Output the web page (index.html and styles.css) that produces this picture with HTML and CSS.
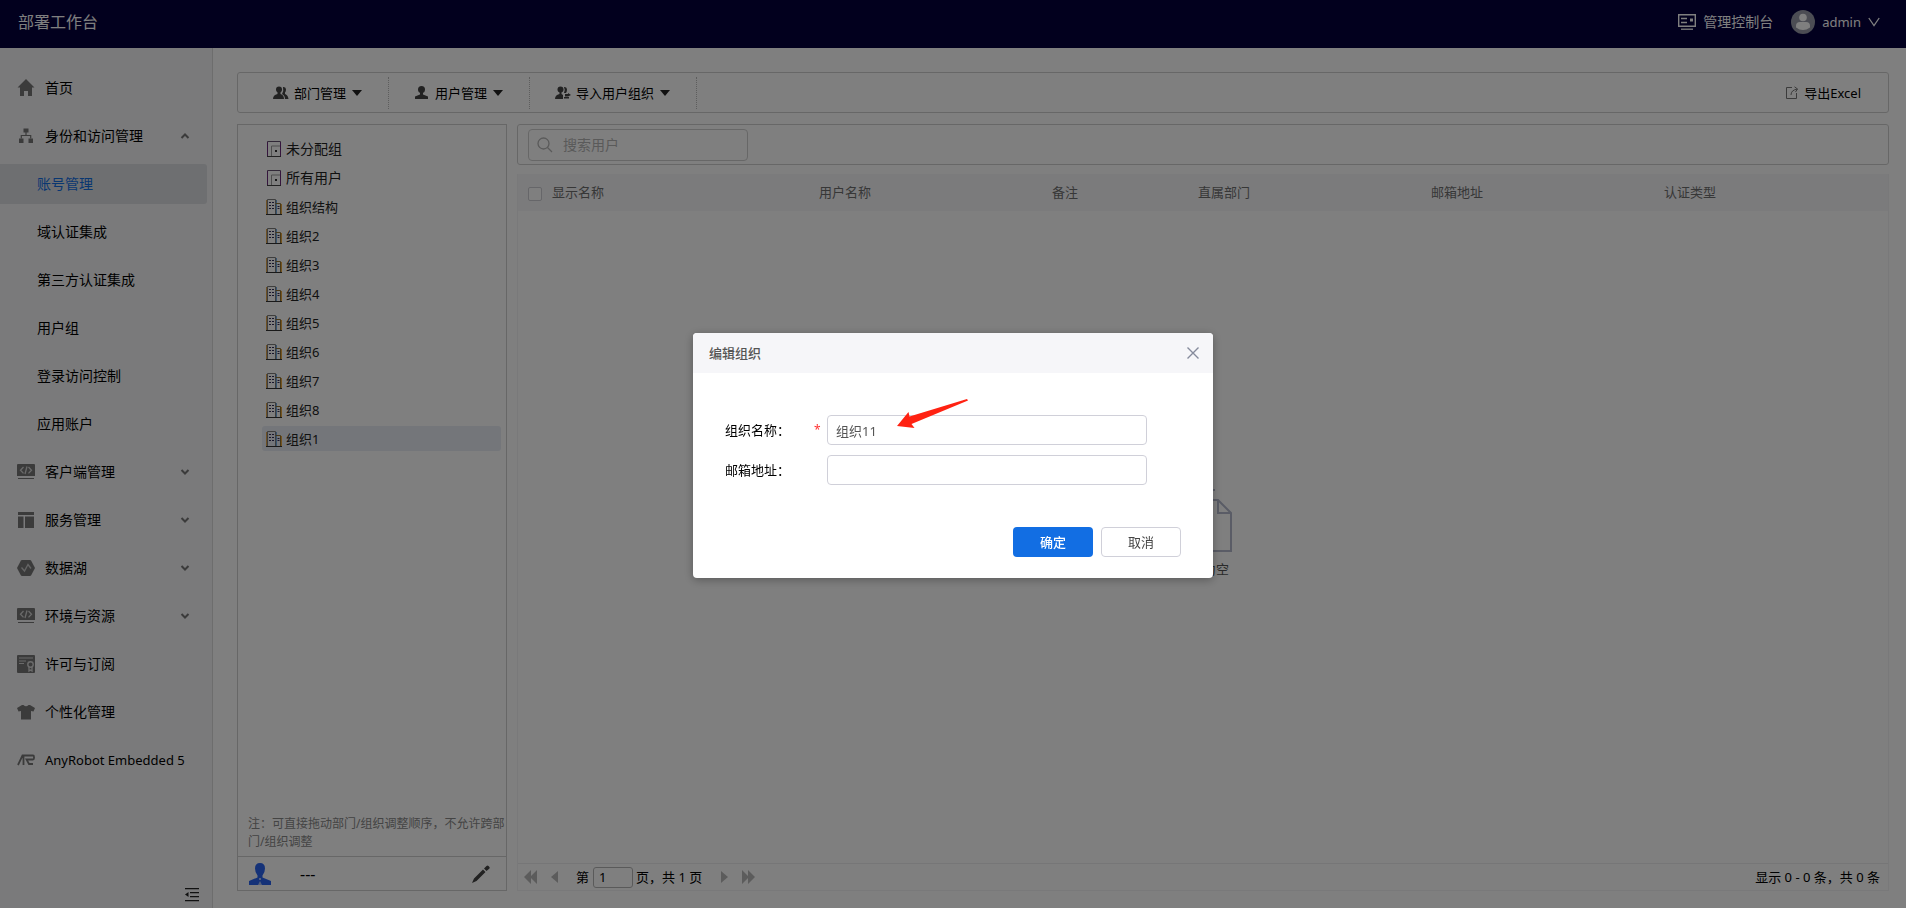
FILE: index.html
```html
<!DOCTYPE html>
<html lang="zh-CN">
<head>
<meta charset="utf-8">
<title>部署工作台</title>
<link rel="stylesheet" href="styles.css">
</head>
<body>
<svg class="defs" aria-hidden="true">
  <symbol id="down" viewBox="0 0 10 8"><path d="M1.5 2 5 5.5 8.500 2" fill="none" stroke="currentColor" stroke-width="2"/></symbol>
  <symbol id="up" viewBox="0 0 10 8"><path d="M1.500 6 5 2.500 8.500 6" fill="none" stroke="currentColor" stroke-width="2"/></symbol>
  <symbol id="code" viewBox="0 0 18 18"><path fill="currentColor" d="M1 1h16a1 1 0 0 1 1 1v11H0V2a1 1 0 0 1 1-1zM1 15h16v1H1z"/><path d="M6.500 4 3.500 7.200l3 3.200M11.500 4l3 3.200-3 3.200M10 3.500 8 11" fill="none" stroke="#d4d4d4" stroke-width="1.300"/></symbol>
  <symbol id="door" viewBox="0 0 16 16"><path d="M1.500.500h13v15h-13z" fill="none" stroke="#62506f"/><path d="M5.500 15V5h8.500" fill="none" stroke="#9a9a9a"/><path d="M9 9h2v2H9z" fill="#333"/><path d="M14.500 1v14M1.500 1v14" stroke="#6b2a7a"/><path d="M1 15.500h14" stroke="#444"/></symbol>
  <symbol id="building" viewBox="0 0 16 16"><path d="M1.500 15V.500h8V15" fill="none" stroke="#7d7d7d"/><path d="M.500 15V1" stroke="#dca24a"/><path d="M10.500 15V1" stroke="#6fa9e0"/><path d="M10 4.500h4.500V15" fill="none" stroke="#8f7030"/><path d="M15.500 5v10" stroke="#e8a840"/><path d="M3 3.500h2m1 0h2M3 6.500h2m1 0h2M3 9.500h2m1 0h2M11.500 7.500h2M11.500 9.500h2" stroke="#302c58"/><path d="M0 15.500h16" stroke="#333"/></symbol>
</svg>

<header class="topbar">
  <h1 class="brand">部署工作台</h1>
  <div class="topbar-right">
    <a class="top-link" href="#">
      <svg width="18" height="16" viewBox="0 0 18 16" fill="none" stroke="currentColor"><path d="M.700.700h16.600v11.600H.700z" stroke-width="1.400"/><path d="M3 4.500h6M3 8.500h6" stroke-width="1.300"/><path d="M12 4.500h3v3h-3z" fill="currentColor" stroke="none"/><path d="M3 15.200h12" stroke-width="1.300"/></svg>
      管理控制台</a>
    <button class="user-button" type="button">
      <svg width="24" height="24" viewBox="0 0 24 24"><circle cx="12" cy="12" r="12" fill="#989ba8"/><circle cx="12" cy="7.500" r="3.800" fill="#fff"/><path fill="#fff" d="M5 16q0-4 4-4h6q4 0 4 4v1.500q-7 5-14 0z"/></svg>
      <span>admin</span>
      <svg width="12" height="10" viewBox="0 0 12 10"><path d="M.800 1 6 8.500 11.200 1" fill="none" stroke="currentColor" stroke-width="1.300"/></svg>
    </button>
  </div>
</header>

<div class="shell">
  <nav class="sidebar">
    <a class="nav-item" href="#"><svg class="nav-icon" viewBox="0 0 18 18" fill="currentColor"><path d="M9 0 .500 8.500H3V17h4v-5h4v5h4V8.500h2.500z"/></svg><span>首页</span></a>
    <a class="nav-item" href="#"><svg class="nav-icon" viewBox="0 0 18 18" fill="currentColor"><path d="M6.500 1.500h5v4h-5zM2 11.500h4.500V16H2zM11.500 11.500H16V16h-4.500z"/><path d="M9 5v3.500M4.300 11.500v-3h9.400v3" fill="none" stroke="currentColor" stroke-width="1.200"/></svg><span>身份和访问管理</span><svg class="chevron"><use href="#up"/></svg></a>
    <a class="nav-item sub active" href="#">账号管理</a>
    <a class="nav-item sub" href="#">域认证集成</a>
    <a class="nav-item sub" href="#">第三方认证集成</a>
    <a class="nav-item sub" href="#">用户组</a>
    <a class="nav-item sub" href="#">登录访问控制</a>
    <a class="nav-item sub" href="#">应用账户</a>
    <a class="nav-item" href="#"><svg class="nav-icon"><use href="#code"/></svg><span>客户端管理</span><svg class="chevron"><use href="#down"/></svg></a>
    <a class="nav-item" href="#"><svg class="nav-icon" viewBox="0 0 18 18" fill="currentColor"><path d="M1 1h16v3H1zM1 5.500h5.500V17H1zM8 5.500h9V17H8z"/></svg><span>服务管理</span><svg class="chevron"><use href="#down"/></svg></a>
    <a class="nav-item" href="#"><svg class="nav-icon" viewBox="0 0 18 18"><path fill="currentColor" d="M5 1h8q.800 0 1.200.700L18 9l-3.800 7.300q-.400.700-1.200.700H5q-.800 0-1.200-.700L0 9l3.800-7.300Q4.200 1 5 1z"/><path d="m4.500 8.500 3 3.500 3.500-6.500 3 4" fill="none" stroke="#c8c8c8" stroke-width="1.300"/></svg><span>数据湖</span><svg class="chevron"><use href="#down"/></svg></a>
    <a class="nav-item" href="#"><svg class="nav-icon"><use href="#code"/></svg><span>环境与资源</span><svg class="chevron"><use href="#down"/></svg></a>
    <a class="nav-item" href="#"><svg class="nav-icon" viewBox="0 0 18 18"><rect width="18" height="18" rx="1" fill="currentColor"/><path d="M2 3h14M2 6h7M2 8.500h5" stroke="#d4d4d4" stroke-width="1.200"/><circle cx="13.500" cy="9.500" r="2.700" fill="none" stroke="#d8d8d8" stroke-width="1.400"/><path d="M12 12v4l1.500-1 1.500 1v-4" fill="none" stroke="#d8d8d8" stroke-width="1.300"/></svg><span>许可与订阅</span></a>
    <a class="nav-item" href="#"><svg class="nav-icon" viewBox="0 0 18 18" fill="currentColor"><path d="M5 2h1.500Q9 4.500 11.500 2H13l5 3-1.500 3.500L14 8v8.500H4V8l-2.500.500L0 5z"/></svg><span>个性化管理</span></a>
    <a class="nav-item" href="#"><svg class="nav-icon" viewBox="0 0 18 18" fill="none" stroke="currentColor" stroke-width="1.800"><path d="M1 14 5.500 4.500h10.500q1 0 1 1.500v1q0 1.500-1 1.500H9.500l2.500 4.500h4M6.500 5v9"/></svg><span class="latin">AnyRobot Embedded 5</span></a>
    <button class="collapse" type="button" aria-label="收起菜单"><svg width="14" height="14" viewBox="0 0 14 14"><path d="M0 .700h14M5 4.700h9M5 8.700h9M0 12.700h14" stroke="#222" stroke-width="1.300"/><path d="M3.500 4v5L0 6.500z" fill="#222"/></svg></button>
  </nav>

  <main class="content">
    <div class="toolbar">
      <button class="tool first" type="button"><svg width="16" height="14" viewBox="0 0 16 14" fill="#444"><circle cx="6" cy="3.500" r="3"/><path d="M4.500 5h3v3Q11 9 11 13H0q0-4 4.500-5z"/><path d="M10 1q3-.500 3 2.500 0 2-1 3v1.500q3 1 3.500 5H12q0-3.500-3-5Q11 5 10 1z"/></svg><span>部门管理</span><i class="caret"></i></button>
      <button class="tool" type="button"><svg width="16" height="14" viewBox="0 0 16 14" fill="#444"><circle cx="7.500" cy="3.500" r="3.500"/><path d="M6 5h3v3.500l5 2V13H1v-2.500l5-2z"/></svg><span>用户管理</span><i class="caret"></i></button>
      <button class="tool" type="button"><svg width="16" height="14" viewBox="0 0 16 14" fill="#444"><circle cx="5.500" cy="3.500" r="3"/><path d="M4.500 5h2v3L8 9v4H0q0-4 4.500-5zM9 1q3-.500 3 2.500 0 2-1 3.500H9Q10.500 4 9 1zM10 8h3V7l3 2-3 1.500h-3zM9 11h5v1.500H9z"/></svg><span>导入用户组织</span><i class="caret"></i></button>
      <button class="export" type="button"><svg width="14" height="14" viewBox="0 0 14 14" fill="none" stroke="#777"><path d="M7 1.500H1.500v11h10V7"/><path d="M6 9Q6 4 12.500 3M9.500.800l3 2.200-2 3"/></svg><span>导出Excel</span></button>
    </div>

    <div class="columns">
      <aside class="org">
        <div class="tree-panel">
          <ul class="tree">
            <li class="root"><svg class="tree-icon"><use href="#door"/></svg>未分配组</li>
            <li class="root"><svg class="tree-icon"><use href="#door"/></svg>所有用户</li>
            <li><svg class="tree-icon"><use href="#building"/></svg>组织结构</li>
            <li><svg class="tree-icon"><use href="#building"/></svg>组织2</li>
            <li><svg class="tree-icon"><use href="#building"/></svg>组织3</li>
            <li><svg class="tree-icon"><use href="#building"/></svg>组织4</li>
            <li><svg class="tree-icon"><use href="#building"/></svg>组织5</li>
            <li><svg class="tree-icon"><use href="#building"/></svg>组织6</li>
            <li><svg class="tree-icon"><use href="#building"/></svg>组织7</li>
            <li><svg class="tree-icon"><use href="#building"/></svg>组织8</li>
            <li class="selected"><svg class="tree-icon"><use href="#building"/></svg>组织1</li>
          </ul>
          <p class="hint">注：可直接拖动部门/组织调整顺序，不允许跨部门/组织调整</p>
        </div>
        <div class="manager">
          <svg width="22" height="22" viewBox="0 0 22 22" fill="#2a65f0"><path d="M11 0q5 0 5 5.500 0 4-2.500 7v2l8.500 3.500v4H0v-4l8.500-3.500v-2Q6 9.500 6 5.500 6 0 11 0z"/><path d="M10 15h2v2h-2zM9 22l2-4 2 4z" fill="#fff" opacity=".6"/></svg>
          <span class="manager-name">---</span>
          <button type="button" class="edit" aria-label="编辑"><svg width="18" height="18" viewBox="0 0 18 18" fill="#444"><path d="M12 3.500 14.500 1q1-1 2 0l.700.700q1 1 0 2L14.500 6zM11 4.500 13.500 7l-9 9L0 18l2-4.500z"/></svg></button>
        </div>
      </aside>

      <section class="users">
        <div class="search-bar">
          <label class="search"><svg width="16" height="16" viewBox="0 0 16 16" fill="none" stroke="#b4b4b4" stroke-width="1.300"><circle cx="6.500" cy="6.500" r="5.500"/><path d="m10.500 10.500 4.500 4.500"/></svg><input type="text" placeholder="搜索用户" aria-label="搜索用户"></label>
        </div>
        <div class="grid">
          <table>
            <colgroup><col class="c-check"><col class="c-wide"><col class="c-user"><col class="c-note"><col class="c-user"><col class="c-user"><col></colgroup>
            <thead><tr><th><input type="checkbox" aria-label="全选"></th><th>显示名称</th><th>用户名称</th><th>备注</th><th>直属部门</th><th>邮箱地址</th><th>认证类型</th></tr></thead>
          </table>
          <div class="empty">
            <svg width="60" height="64" viewBox="0 0 60 64" fill="none" stroke="#b4b9cc" stroke-width="2"><path d="M2 12h43l13 13v38H2zM45 12v13h13M30 0v4M40 2h2"/></svg>
            <p>列表为空</p>
          </div>
          <div class="pager">
            <button type="button" aria-label="首页"><svg width="14" height="14" viewBox="0 0 14 14"><path d="M7 0v14L0 7zM13 0v14L6 7z"/></svg></button>
            <button type="button" aria-label="上一页"><svg width="8" height="14" viewBox="0 0 8 14"><path d="M7 1v12L0 7z"/></svg></button>
            <label class="page-no">第 <input type="text" value="1" aria-label="页码"></label>
            <span class="page-total">页，共 1 页</span>
            <button type="button" aria-label="下一页"><svg width="8" height="14" viewBox="0 0 8 14"><path d="M1 1v12l7-6z"/></svg></button>
            <button type="button" aria-label="末页"><svg width="14" height="14" viewBox="0 0 14 14"><path d="M1 0v14l7-7zM7 0v14l7-7z"/></svg></button>
            <span class="summary">显示 0 - 0 条，共 0 条</span>
          </div>
        </div>
      </section>
    </div>
  </main>
</div>

<div class="mask">
  <form class="dialog" role="dialog" aria-labelledby="dialog-title">
    <div class="dialog-head">
      <h2 id="dialog-title">编辑组织</h2>
      <button type="button" class="close" aria-label="关闭"><svg width="12" height="12" viewBox="0 0 12 12"><path d="m.500.500 11 11m0-11-11 11" stroke="#868b9c" stroke-width="1.400"/></svg></button>
    </div>
    <div class="dialog-body">
      <div class="field"><label for="org-name">组织名称：</label><span class="required">*</span><input id="org-name" type="text" value="组织11"></div>
      <div class="field"><label for="org-mail">邮箱地址：</label><span class="required"></span><input id="org-mail" type="text"></div>
      <svg class="arrow" width="72" height="30" viewBox="0 0 72 30"><path fill="#ff2212" d="M0 27 11.500 13l1 4.500L70 0l1 1.500L14.500 25l3 4z"/></svg>
    </div>
    <div class="dialog-foot">
      <button type="submit" class="primary">确定</button>
      <button type="button" class="secondary">取消</button>
    </div>
  </form>
</div>
</body>
</html>
```

FILE: styles.css
```css
* { box-sizing: border-box; }
body {
  margin: 0;
  height: 100vh;
  display: flex;
  flex-direction: column;
  overflow: hidden;
  background: #fff;
  color: #000;
  font: 13px/18px "Noto Sans", "Noto Sans CJK SC", sans-serif;
}
button, input { font: inherit; color: inherit; }
button { display: flex; align-items: center; border: 0; padding: 0; background: none; }
a { color: inherit; text-decoration: none; }
h1, h2, p, ul { margin: 0; padding: 0; }
svg { flex: none; }
.defs { position: absolute; width: 0; height: 0; }

.topbar {
  flex: none;
  height: 48px;
  display: flex;
  align-items: center;
  justify-content: space-between;
  padding: 0 26px 4px 18px;
  background: #04003c;
  color: #fff;
}
.brand { font-size: 16px; line-height: 24px; font-weight: 400; }
.topbar-right { display: flex; align-items: center; gap: 18px; }
.top-link { display: flex; align-items: center; gap: 7px; font-size: 14px; }
.user-button { gap: 7px; }

.shell { flex: 1; min-height: 0; display: flex; }
.sidebar {
  flex: none;
  width: 213px;
  display: flex;
  flex-direction: column;
  gap: 8px;
  padding: 20px 5px 6px 0;
  background: #f5f5f6;
  border-right: 1px solid #dadada;
  font-size: 14px;
}
.nav-item { height: 40px; display: flex; align-items: center; padding: 0 17px; gap: 10px; white-space: nowrap; }
.nav-icon { width: 18px; height: 18px; color: #777; }
.latin { font-size: 13px; }
.chevron { width: 10px; height: 8px; margin-left: auto; color: #777; }
.sub { padding-left: 37px; }
.active { background: #dcdee2; color: #126ee3; border-radius: 0 3px 3px 0; }
.collapse { margin: auto 8px 0 auto; }

.content { flex: 1; min-width: 0; display: flex; flex-direction: column; gap: 11px; padding: 24px 17px 17px 24px; }
.toolbar { flex: none; height: 41px; display: flex; align-items: center; border: 1px solid #cfcfcf; border-radius: 3px; }
.tool { height: 32px; padding: 0 26px 0 25px; border-right: 1px dotted #bbb; gap: 5px; }
.first { padding-left: 35px; }
.caret { margin-left: 1px; border: 5px solid transparent; border-top: 6px solid #222; border-bottom: 0; }
.export { margin: 0 27px 0 auto; gap: 5px; }

.columns { flex: 1; min-height: 0; display: flex; gap: 10px; }
.org { flex: none; width: 270px; display: flex; flex-direction: column; }
.tree-panel { flex: 1; display: flex; flex-direction: column; justify-content: space-between; border: 1px solid #cfcfcf; border-bottom: 0; padding: 11px 0 5px; }
.tree { list-style: none; display: flex; flex-direction: column; gap: 4px; padding: 0 5px 0 24px; color: #222; }
.tree li { height: 25px; display: flex; align-items: center; gap: 4px; padding-left: 4px; border-radius: 3px; }
.tree .root { font-size: 14px; }
.tree .selected { background: #e8edf4; }
.tree-icon { width: 16px; height: 16px; }
.hint { padding-left: 10px; font-size: 12px; color: #888; }
.manager { flex: none; height: 35px; display: flex; align-items: center; gap: 29px; padding: 0 16px 0 11px; border: 1px solid #cfcfcf; }
.manager-name { font-size: 16px; }
.edit { margin-left: auto; }

.users { flex: 1; min-width: 0; display: flex; flex-direction: column; gap: 9px; }
.search-bar { flex: none; height: 41px; display: flex; align-items: center; padding-left: 10px; border: 1px solid #cfcfcf; border-radius: 3px; }
.search { width: 220px; height: 32px; display: flex; align-items: center; gap: 10px; padding: 0 8px; border: 1px solid #cfcfcf; border-radius: 4px; font-size: 14px; }
.search input { flex: 1; min-width: 0; border: 0; padding: 0; outline: 0; background: none; }
.search input::placeholder { color: #b4b4b4; }

.grid { flex: 1; min-height: 0; display: flex; flex-direction: column; border: 1px solid #f3f3f5; border-top: 0; }
table { width: 100%; table-layout: fixed; border-collapse: collapse; }
th { height: 37px; padding: 0 0 2px; text-align: left; font-weight: 400; color: #6f6f6f; background: #f6f6f9; }
th input { display: block; appearance: none; width: 14px; height: 14px; margin: 4px 0 0 10px; border: 1px solid #cdcdd2; border-radius: 2px; background: #fff; }
.c-check { width: 34px; }
.c-wide { width: 267px; }
.c-user { width: 233px; }
.c-note { width: 146px; }
.empty { flex: 1; display: flex; flex-direction: column; align-items: center; justify-content: center; gap: 8px; padding-bottom: 8px; color: #555; }
.pager { flex: none; height: 27px; display: flex; align-items: center; padding: 0 8px 0 6px; border-top: 1px solid #ececee; }
.pager button { margin-right: 13px; }
.pager button path { fill: #b9b9b9; }
.page-no { display: flex; align-items: center; gap: 4px; margin: 0 3px 0 4px; }
.page-no input { width: 40px; height: 21px; padding: 0 5px; border: 1px solid #b5b5b5; border-radius: 3px; background: #fff; }
.page-total { margin-right: 18px; }
.summary { margin-left: auto; }

.mask { position: fixed; inset: 0; display: flex; align-items: center; justify-content: center; background: rgba(0, 0, 0, 0.5); }
.dialog { width: 520px; margin-top: 3px; border-radius: 4px; background: #fff; box-shadow: 0 2px 10px rgba(0, 0, 0, 0.3); overflow: hidden; }
.dialog-head { height: 40px; display: flex; align-items: center; justify-content: space-between; padding: 0 14px 0 16px; background: #f6f6f9; color: #555; }
.dialog-head h2 { font: inherit; font-weight: 500; }
.dialog-body { position: relative; display: flex; flex-direction: column; gap: 10px; padding: 42px 32px 0; }
.field { display: flex; align-items: center; }
.field label { width: 89px; }
.required { width: 13px; color: #f33; font-size: 12px; }
.field input { width: 320px; height: 30px; padding: 0 8px; border: 1px solid #d0d0d9; border-radius: 4px; background: #fff; color: #555; }
.arrow { position: absolute; left: 204px; top: 26px; }
.dialog-foot { display: flex; justify-content: flex-end; gap: 8px; padding: 42px 32px 21px; }
.dialog-foot button { width: 80px; height: 30px; justify-content: center; border-radius: 4px; }
.primary { background: #126ee3; color: #fff; }
.dialog-foot .primary { font-weight: 500; }
.secondary { border: 1px solid #d0d0d9; color: #444; }
```
